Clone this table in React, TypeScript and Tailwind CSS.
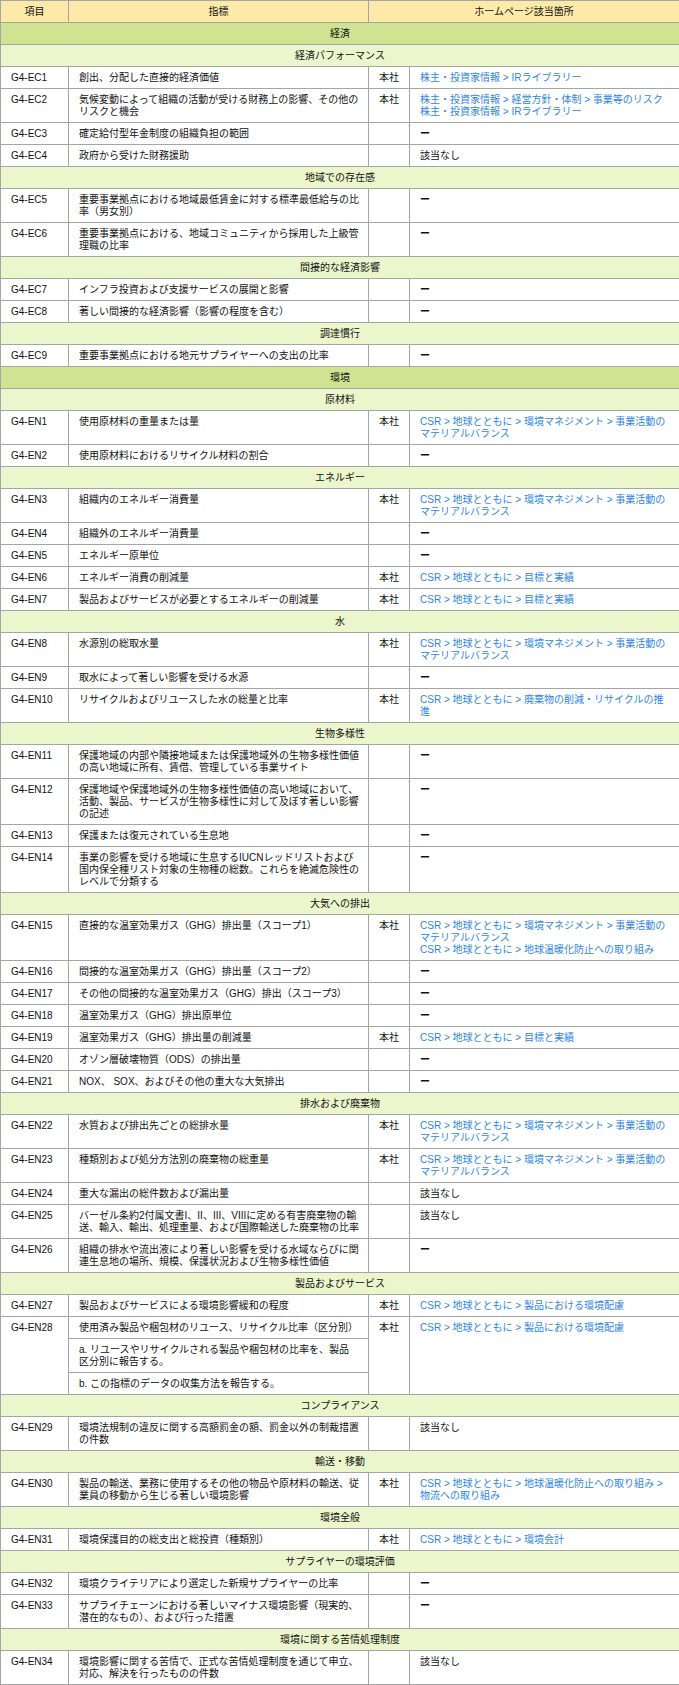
import { Fragment } from "react";

type Item = {
  code: string;
  text: string[];
  hq?: boolean;
  links?: string[];
  note?: string;
};

type Row = { cat: string; major?: boolean } | Item;

const MATBAL = ["CSR > 地球とともに > 環境マネジメント > 事業活動の", "マテリアルバランス"];
const TARGET = ["CSR > 地球とともに > 目標と実績"];
const PRODUCT = ["CSR > 地球とともに > 製品における環境配慮"];
const DASH = "ー";
const NA = "該当なし";

const rows: Row[] = [
  { cat: "経済", major: true },
  { cat: "経済パフォーマンス" },
  { code: "G4-EC1", text: ["創出、分配した直接的経済価値"], hq: true, links: ["株主・投資家情報 > IRライブラリー"] },
  {
    code: "G4-EC2",
    text: ["気候変動によって組織の活動が受ける財務上の影響、その他の", "リスクと機会"],
    hq: true,
    links: ["株主・投資家情報 > 経営方針・体制 > 事業等のリスク", "株主・投資家情報 > IRライブラリー"],
  },
  { code: "G4-EC3", text: ["確定給付型年金制度の組織負担の範囲"], note: DASH },
  { code: "G4-EC4", text: ["政府から受けた財務援助"], note: NA },
  { cat: "地域での存在感" },
  { code: "G4-EC5", text: ["重要事業拠点における地域最低賃金に対する標準最低給与の比", "率（男女別）"], note: DASH },
  { code: "G4-EC6", text: ["重要事業拠点における、地域コミュニティから採用した上級管", "理職の比率"], note: DASH },
  { cat: "間接的な経済影響" },
  { code: "G4-EC7", text: ["インフラ投資および支援サービスの展開と影響"], note: DASH },
  { code: "G4-EC8", text: ["著しい間接的な経済影響（影響の程度を含む）"], note: DASH },
  { cat: "調達慣行" },
  { code: "G4-EC9", text: ["重要事業拠点における地元サプライヤーへの支出の比率"], note: DASH },
  { cat: "環境", major: true },
  { cat: "原材料" },
  { code: "G4-EN1", text: ["使用原材料の重量または量"], hq: true, links: MATBAL },
  { code: "G4-EN2", text: ["使用原材料におけるリサイクル材料の割合"], note: DASH },
  { cat: "エネルギー" },
  { code: "G4-EN3", text: ["組織内のエネルギー消費量"], hq: true, links: MATBAL },
  { code: "G4-EN4", text: ["組織外のエネルギー消費量"], note: DASH },
  { code: "G4-EN5", text: ["エネルギー原単位"], note: DASH },
  { code: "G4-EN6", text: ["エネルギー消費の削減量"], hq: true, links: TARGET },
  { code: "G4-EN7", text: ["製品およびサービスが必要とするエネルギーの削減量"], hq: true, links: TARGET },
  { cat: "水" },
  { code: "G4-EN8", text: ["水源別の総取水量"], hq: true, links: MATBAL },
  { code: "G4-EN9", text: ["取水によって著しい影響を受ける水源"], note: DASH },
  {
    code: "G4-EN10",
    text: ["リサイクルおよびリユースした水の総量と比率"],
    hq: true,
    links: ["CSR > 地球とともに > 廃棄物の削減・リサイクルの推", "進"],
  },
  { cat: "生物多様性" },
  {
    code: "G4-EN11",
    text: ["保護地域の内部や隣接地域または保護地域外の生物多様性価値", "の高い地域に所有、賃借、管理している事業サイト"],
    note: DASH,
  },
  {
    code: "G4-EN12",
    text: [
      "保護地域や保護地域外の生物多様性価値の高い地域において、",
      "活動、製品、サービスが生物多様性に対して及ぼす著しい影響",
      "の記述",
    ],
    note: DASH,
  },
  { code: "G4-EN13", text: ["保護または復元されている生息地"], note: DASH },
  {
    code: "G4-EN14",
    text: [
      "事業の影響を受ける地域に生息するIUCNレッドリストおよび",
      "国内保全種リスト対象の生物種の総数。これらを絶滅危険性の",
      "レベルで分類する",
    ],
    note: DASH,
  },
  { cat: "大気への排出" },
  {
    code: "G4-EN15",
    text: ["直接的な温室効果ガス（GHG）排出量（スコープ1）"],
    hq: true,
    links: [...MATBAL, "CSR > 地球とともに > 地球温暖化防止への取り組み"],
  },
  { code: "G4-EN16", text: ["間接的な温室効果ガス（GHG）排出量（スコープ2）"], note: DASH },
  { code: "G4-EN17", text: ["その他の間接的な温室効果ガス（GHG）排出（スコープ3）"], note: DASH },
  { code: "G4-EN18", text: ["温室効果ガス（GHG）排出原単位"], note: DASH },
  { code: "G4-EN19", text: ["温室効果ガス（GHG）排出量の削減量"], hq: true, links: TARGET },
  { code: "G4-EN20", text: ["オゾン層破壊物質（ODS）の排出量"], note: DASH },
  { code: "G4-EN21", text: ["NOX、 SOX、およびその他の重大な大気排出"], note: DASH },
  { cat: "排水および廃棄物" },
  { code: "G4-EN22", text: ["水質および排出先ごとの総排水量"], hq: true, links: MATBAL },
  { code: "G4-EN23", text: ["種類別および処分方法別の廃棄物の総重量"], hq: true, links: MATBAL },
  { code: "G4-EN24", text: ["重大な漏出の総件数および漏出量"], note: NA },
  {
    code: "G4-EN25",
    text: ["バーゼル条約2付属文書I、II、III、VIIIに定める有害廃棄物の輸", "送、輸入、輸出、処理重量、および国際輸送した廃棄物の比率"],
    note: NA,
  },
  {
    code: "G4-EN26",
    text: ["組織の排水や流出液により著しい影響を受ける水域ならびに関", "連生息地の場所、規模、保護状況および生物多様性価値"],
    note: DASH,
  },
  { cat: "製品およびサービス" },
  { code: "G4-EN27", text: ["製品およびサービスによる環境影響緩和の程度"], hq: true, links: PRODUCT },
  { code: "G4-EN28", text: [], hq: true, links: PRODUCT },
  { cat: "コンプライアンス" },
  {
    code: "G4-EN29",
    text: ["環境法規制の違反に関する高額罰金の額、罰金以外の制裁措置", "の件数"],
    note: NA,
  },
  { cat: "輸送・移動" },
  {
    code: "G4-EN30",
    text: ["製品の輸送、業務に使用するその他の物品や原材料の輸送、従", "業員の移動から生じる著しい環境影響"],
    hq: true,
    links: ["CSR > 地球とともに > 地球温暖化防止への取り組み >", "物流への取り組み"],
  },
  { cat: "環境全般" },
  { code: "G4-EN31", text: ["環境保護目的の総支出と総投資（種類別）"], hq: true, links: ["CSR > 地球とともに > 環境会計"] },
  { cat: "サプライヤーの環境評価" },
  { code: "G4-EN32", text: ["環境クライテリアにより選定した新規サプライヤーの比率"], note: DASH },
  {
    code: "G4-EN33",
    text: ["サプライチェーンにおける著しいマイナス環境影響（現実的、", "潜在的なもの）、および行った措置"],
    note: DASH,
  },
  { cat: "環境に関する苦情処理制度" },
  {
    code: "G4-EN34",
    text: ["環境影響に関する苦情で、正式な苦情処理制度を通じて申立、", "対応、解決を行ったものの件数"],
    note: NA,
  },
];

const cell = "border border-[#a5a5a5] pt-[5px] pb-[4px] align-top whitespace-nowrap overflow-hidden";

function Lines({ lines }: { lines: string[] }) {
  return (
    <>
      {lines.map((l, i) => (
        <Fragment key={i}>
          {i > 0 && <br />}
          {l}
        </Fragment>
      ))}
    </>
  );
}

function PageCell({ item, span }: { item: Item; span?: number }) {
  return (
    <td rowSpan={span} className={`${cell} pl-[10px] pr-[2px]`}>
      {item.links ? (
        <a href="#" className="text-[#2f86e4]">
          <Lines lines={item.links} />
        </a>
      ) : item.note === DASH ? (
        <span className="font-bold">{DASH}</span>
      ) : (
        item.note
      )}
    </td>
  );
}

function ItemRows({ item }: { item: Item }) {
  if (item.code === "G4-EN28") {
    return (
      <>
        <tr>
          <td rowSpan={3} className={`${cell} pl-[10px]`}>{item.code}</td>
          <td className={`${cell} pl-[10px] pr-[4px]`}>使用済み製品や梱包材のリユース、リサイクル比率（区分別）</td>
          <td rowSpan={3} className={`${cell} text-center`}>本社</td>
          <PageCell item={item} span={3} />
        </tr>
        <tr>
          <td className={`${cell} pl-[10px] pr-[4px]`}>
            <Lines lines={["a. リユースやリサイクルされる製品や梱包材の比率を、製品", "区分別に報告する。"]} />
          </td>
        </tr>
        <tr>
          <td className={`${cell} pl-[10px] pr-[4px]`}>b. この指標のデータの収集方法を報告する。</td>
        </tr>
      </>
    );
  }
  return (
    <tr>
      <td className={`${cell} pl-[10px]`}>{item.code}</td>
      <td className={`${cell} pl-[10px] pr-[4px]`}>
        <Lines lines={item.text} />
      </td>
      <td className={`${cell} text-center`}>{item.hq ? "本社" : ""}</td>
      <PageCell item={item} />
    </tr>
  );
}

export default function App() {
  return (
    <div className="w-[679px] bg-white text-[#111] font-['Liberation_Sans','Noto_Sans_CJK_JP',sans-serif] text-[10px] leading-[12px]">
      <table className="w-[679px] table-fixed border-collapse">
        <colgroup>
          <col className="w-[68px]" />
          <col className="w-[300px]" />
          <col className="w-[41px]" />
          <col className="w-[270px]" />
        </colgroup>
        <thead>
          <tr className="bg-[#fdeaa8]">
            <th className={`${cell} text-center font-normal`}>項目</th>
            <th className={`${cell} text-center font-normal`}>指標</th>
            <th colSpan={2} className={`${cell} text-center font-normal`}>
              ホームページ該当箇所
            </th>
          </tr>
        </thead>
        <tbody>
          {rows.map((r, i) =>
            "cat" in r ? (
              <tr key={i} className={r.major ? "bg-[#cfe393]" : "bg-[#ecf6cd]"}>
                <td colSpan={4} className={`${cell} text-center`}>
                  {r.cat}
                </td>
              </tr>
            ) : (
              <ItemRows key={i} item={r} />
            )
          )}
        </tbody>
      </table>
    </div>
  );
}
